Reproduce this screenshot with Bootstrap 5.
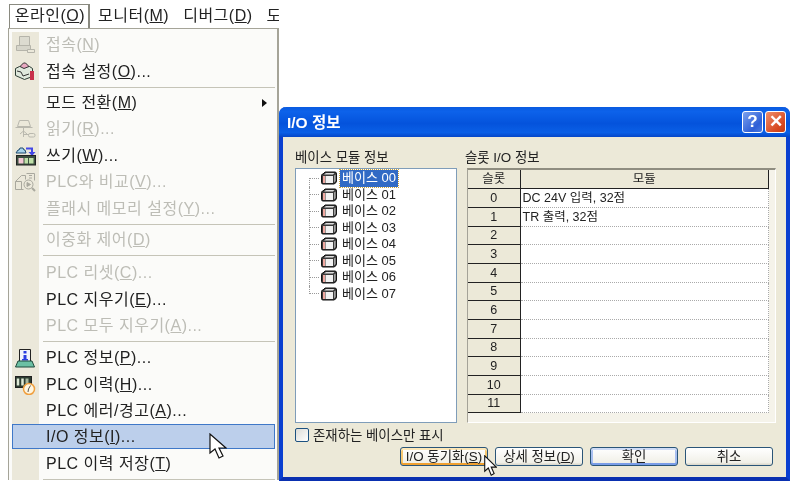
<!DOCTYPE html>
<html lang="ko">
<head>
<meta charset="utf-8">
<title>I/O 정보</title>
<link href="https://cdn.jsdelivr.net/npm/bootstrap@5.3.0/dist/css/bootstrap.min.css" rel="stylesheet">
<style>
html,body{height:100%;margin:0;background:#fff;overflow:hidden}
body{font-family:"Liberation Sans","Noto Sans CJK KR",sans-serif;color:#222}
.stage{position:relative;width:800px;height:493px;overflow:hidden;background:#fff;filter:blur(.35px)}
.menubar{height:24px;margin:4px 0 0 9px;width:270px;font-size:16px;letter-spacing:.5px;line-height:22px;overflow:hidden;white-space:nowrap}
.mb-active{width:81px;text-align:center;border:1px solid #8a8a80;border-bottom:0;border-right-width:2px;flex:none;padding-left:2px}
.mb-item{flex:none;margin-left:8px;padding-top:1px}
.mb-item+.mb-item{margin-left:14px}
.popmenu{position:absolute;left:8px;top:28px;width:271px;height:452px;background:#fbfbf9;border:1px solid #a5a498;border-width:1px 2px 0 1px;padding-top:3px;overflow:hidden;font-size:16px;letter-spacing:.5px}
.popmenu::before{content:"";position:absolute;left:3px;top:3px;bottom:0;width:27px;background:#ebe8da}
.mrow{position:relative;height:26.4px;display:flex;align-items:center;padding-left:34px;margin-left:3px;margin-right:2px;white-space:nowrap;color:#222}
.mrow.off{color:#bdbdb6}
.mrow.hot{background:#bccfeb;border:1px solid #3f78c8;padding-left:33px;height:25px;margin-bottom:1px}
.mico{position:absolute;left:2px;top:3px;width:22px;height:20px}
.msep{position:relative;height:1px;background:#c5c4b8;margin:2px 2px 2px 34px;border:0;opacity:1}
.msep.wide{margin-bottom:4px}
.msep.wider{margin-bottom:3px}
.arrow{position:absolute;right:8px;top:9px;width:0;height:0;border-left:5px solid #111;border-top:4px solid transparent;border-bottom:4px solid transparent}
.xpwin{position:absolute;left:279px;top:107px;width:511px;height:374px;background:#ece9d8;border:4px solid #0a3fd0;border-bottom-color:#0a30b0;border-top:0;border-radius:7px 7px 0 0;font-size:13.4px}
.xptitle{height:30px;margin:0 -4px;background:linear-gradient(#0a5be0,#0d62ea 15%,#0453dc 55%,#0a5fe6 85%,#0546c8);border-radius:7px 7px 0 0;color:#fff;font-weight:700;font-size:15.5px;padding-left:8px;line-height:31px;display:flex;align-items:center}
.wbtn{width:21px;height:22px;border:1px solid #fff;border-radius:3px;color:#fff;font-size:17px;font-weight:700;line-height:20px;text-align:center;flex:none;padding:0;margin-top:-1px}
.w-help{margin-left:auto;background:linear-gradient(135deg,#7ba2ee,#2f5fd6 70%,#4a7ae0)}
.w-close{margin-left:2px;margin-right:4px;background:linear-gradient(135deg,#ee8f6c,#d84a22 70%,#c63c12)}
.xpbody{padding:14px 12px 0}
.lbl{line-height:14px;height:18px;white-space:nowrap}
.treebox{width:162px;height:255px;background:#fff;border:1px solid #7f9db9;padding-top:1px;margin-top:-1px;font-size:13px}
.tnode{height:16.5px;display:flex;align-items:stretch;padding-left:13px;line-height:16px;white-space:nowrap}
.tstub{width:11px;flex:none;border-left:1px dotted #999;background:repeating-linear-gradient(90deg,#999 0 1px,transparent 1px 2px) left center/100% 1px no-repeat}
.tnode:first-child .tstub{height:50%;align-self:flex-end;background-position:left top}
.tnode:last-child .tstub{height:50%;background-position:left bottom}
.boxico{width:17px;height:14px;flex:none;align-self:center;margin-right:3px}
.tname{padding:0 2px}
.tname.sel{background:#316ac5;color:#fff;outline:1px dotted #c9a23a}
.slotframe{width:309px;height:255px;margin:-1px 0 0 2px;background:#f5f3ea;border-top:2px solid #8f8d80;border-left:1px solid #a5a398;border-right:1px solid #fff;border-bottom:1px solid #fff;padding-right:6px}
.slot-t{width:100%;margin:0;table-layout:fixed;border-collapse:collapse;background:#fff;font-size:12.5px;color:#222}
.slot-narrow{width:52px}
.slot-t th,.slot-t td{padding:0;line-height:16px;vertical-align:middle;font-weight:400;box-shadow:none;background:transparent;color:inherit}
.slot-t thead tr{height:18px}
.slot-t tbody tr{height:19px}
.slot-t tbody tr:nth-child(3n){height:18px}
.slot-t th{background:#ece9d8;text-align:center;border-right:1px solid #222;border-bottom:1px solid #222}
.slot-t td{padding-left:2px;border-bottom:1px dotted #aaa;border-right:1px dotted #aaa}
.chkrow{margin-top:5px;height:16px;line-height:15px;white-space:nowrap;padding:0;min-height:0}
.chkrow .form-check-input{float:none;margin:0 4px 0 0;width:14px;height:14px;border-radius:2px;border:1px solid #1c5180;background:linear-gradient(135deg,#dcdcd7,#fff);vertical-align:top}
.btnrow{margin-top:3px;padding-left:105px;gap:7px}
.xpbtn{width:88px;height:19px;padding:0;font-size:13.4px;line-height:16px;color:#222;border:1px solid #2a5578;border-radius:3px;background:linear-gradient(#fff,#f1f0e8 85%,#d8d5c8);white-space:nowrap}
.xpbtn.hotb{box-shadow:inset 0 -2px 0 #f0a030,inset 0 2px 0 #fce7b8,inset 2px 0 0 #f8c870,inset -2px 0 0 #f8c870}
.xpbtn.defb{box-shadow:inset 0 -2px 0 #7a9de8,inset 0 2px 0 #cfdcf6,inset 2px 0 0 #a8bff0,inset -2px 0 0 #a8bff0}
.curs{position:absolute;pointer-events:none}
.cur-a{left:209px;top:433px}
.cur-b{left:484px;top:455px}
</style>
</head>
<body>
<svg width="0" height="0" class="position-absolute" aria-hidden="true"><defs>
  <g id="modbox">
    <path d="M1.500 4.500Q1.500 3 3 3L5 1H15Q16.500 1 16.500 3V10Q16.500 12 14 13H3Q1.500 13 1.500 11.500Z" fill="#3a3a3a" stroke="#111"/>
    <path d="M3 5h2v7H3z" fill="#f0a8a0"/>
    <path d="M5.500 5H13v7H5.500z" fill="#f2f2f2"/>
    <path d="M4 3.500L6 2H14.500L13 3.500z" fill="#ddd"/>
    <path d="M14.200 4.500L15.500 3.500V10L14.200 11.500z" fill="#bbb"/>
  </g>
</defs></svg>
<div class="stage">
  <div class="menubar d-flex">
    <div class="mb-active">온라인(<u>O</u>)</div>
    <div class="mb-item">모니터(<u>M</u>)</div>
    <div class="mb-item">디버그(<u>D</u>)</div>
    <div class="mb-item">도</div>
  </div>

  <div class="popmenu">
    <div class="mrow off"><svg class="mico" viewBox="0 0 22 20"><path d="M5.500 1.500h10v9h-10z" fill="#dcdbd0" stroke="#b5b4aa"/><path d="M2.500 10.500h14v5h-14z" fill="#d6d5ca" stroke="#b5b4aa"/><path d="M13.500 14.500h7v3h-7z" fill="#ebe8da" stroke="#b5b4aa"/></svg>접속(<u>N</u>)</div>
    <div class="mrow"><svg class="mico" viewBox="0 0 22 20"><path d="M1.500 7.500l4-2h10l3 2v8l-8 3-9-4z" fill="#dfe8dc" stroke="#2c3c34"/><path d="M6 5.500l3.500-3.500h2l3.500 3.500-5 2z" fill="#e8a8c0" stroke="#333"/><path d="M3 10l4 1 2 4 6-2" fill="none" stroke="#333"/><rect x="16" y="10" width="4" height="9" fill="#c8304a"/></svg>접속 설정(<u>O</u>)...</div>
    <hr class="msep">
    <div class="mrow">모드 전환(<u>M</u>)<span class="arrow"></span></div>
    <div class="mrow off"><svg class="mico" viewBox="0 0 22 20"><g fill="none" stroke="#b9b8ae"><path d="M5.500 1.500h9l2 6h-13zM1.500 8.500h17"/><path d="M9.500 9v9M6 15l3.500-3 3.500 3M9.500 15.500H15"/><rect x="14.500" y="14.500" width="6.500" height="3.500" rx="1.500"/></g></svg>읽기(<u>R</u>)...</div>
    <div class="mrow"><svg class="mico" viewBox="0 0 22 20"><path d="M2 7l2-3h1l1-2h3l1 2h1l1 3z" fill="#a8d4ec" stroke="#1f4a6e"/><path d="M12 2.500h6V6" fill="none" stroke="#4448e6" stroke-width="2"/><path d="M14.500 6h7L18 10z" fill="#4448e6"/><rect x="2.500" y="9.500" width="19" height="9.500" fill="#3c5040" stroke="#222"/><rect x="4.500" y="12" width="5" height="5.500" fill="#f4c8d4"/><rect x="10.500" y="12" width="3.500" height="5.500" fill="#bfe0a8"/><rect x="15" y="12" width="4.500" height="5.500" fill="#bfe0a8"/></svg>쓰기(<u>W</u>)...</div>
    <div class="mrow off"><svg class="mico" viewBox="0 0 22 20"><g fill="none" stroke="#a9a89e"><path d="M1.500 9.500l6-6h4v4M1.500 9.500v8h8M1.500 9.500h6v8"/><path d="M12.500 1.500h8v7M15 3.500h3M15 6h3"/><circle cx="14.500" cy="12.500" r="4.500"/><path d="M13 10.500l3.500 2-3.500 2z" fill="#a9a89e"/><path d="M18 16l3 3" stroke-width="2"/></g></svg>PLC와 비교(<u>V</u>)...</div>
    <div class="mrow off">플래시 메모리 설정(<u>Y</u>)...</div>
    <hr class="msep">
    <div class="mrow off">이중화 제어(<u>D</u>)</div>
    <hr class="msep wide">
    <div class="mrow off">PLC 리셋(<u>C</u>)...</div>
    <div class="mrow">PLC 지우기(<u>E</u>)...</div>
    <div class="mrow off">PLC 모두 지우기(<u>A</u>)...</div>
    <hr class="msep wider">
    <div class="mrow"><svg class="mico" viewBox="0 0 22 20"><path d="M5.500 1.500h11v12h-11z" fill="#f0f2fb" stroke="#222"/><path d="M9.500 3h3v2.500h-3zM9.500 7h3v4h1.500v1.500H8V11h1.500z" fill="#2a3ce0"/><path d="M4 13h14l2.500 6H1.500z" fill="#6cc0a4" stroke="#1f4a3c"/></svg>PLC 정보(<u>P</u>)...</div>
    <div class="mrow"><svg class="mico" viewBox="0 0 22 20"><rect x="1.500" y="1.500" width="16" height="11" fill="#2c3c30" stroke="#222"/><path d="M4 3.500v7M8.500 3.500v7" stroke="#e0ead8" stroke-width="2.500"/><path d="M13 3.500v7" stroke="#a8b8a0" stroke-width="3"/><circle cx="15" cy="14" r="5.500" fill="#fff6e0" stroke="#f0a040" stroke-width="1.500"/><path d="M16.500 10.500L14.500 14l-.5 3" stroke="#555" fill="none"/></svg>PLC 이력(<u>H</u>)...</div>
    <div class="mrow">PLC 에러/경고(<u>A</u>)...</div>
    <div class="mrow hot">I/O 정보(<u>I</u>)...</div>
    <div class="mrow">PLC 이력 저장(<u>T</u>)</div>
    <hr class="msep">
  </div>

  <div class="xpwin">
    <div class="xptitle">
      <span>I/O 정보</span>
      <button class="wbtn w-help" type="button">?</button>
      <button class="wbtn w-close" type="button">✕</button>
    </div>
    <div class="xpbody">
      <div class="d-flex gap-2">
        <div>
          <div class="lbl">베이스 모듈 정보</div>
          <div class="treebox">
            <div class="tnode"><span class="tstub"></span><svg class="boxico" viewBox="0 0 17 14"><use href="#modbox"/></svg><span class="tname sel">베이스 00</span></div>
            <div class="tnode"><span class="tstub"></span><svg class="boxico" viewBox="0 0 17 14"><use href="#modbox"/></svg><span class="tname">베이스 01</span></div>
            <div class="tnode"><span class="tstub"></span><svg class="boxico" viewBox="0 0 17 14"><use href="#modbox"/></svg><span class="tname">베이스 02</span></div>
            <div class="tnode"><span class="tstub"></span><svg class="boxico" viewBox="0 0 17 14"><use href="#modbox"/></svg><span class="tname">베이스 03</span></div>
            <div class="tnode"><span class="tstub"></span><svg class="boxico" viewBox="0 0 17 14"><use href="#modbox"/></svg><span class="tname">베이스 04</span></div>
            <div class="tnode"><span class="tstub"></span><svg class="boxico" viewBox="0 0 17 14"><use href="#modbox"/></svg><span class="tname">베이스 05</span></div>
            <div class="tnode"><span class="tstub"></span><svg class="boxico" viewBox="0 0 17 14"><use href="#modbox"/></svg><span class="tname">베이스 06</span></div>
            <div class="tnode"><span class="tstub"></span><svg class="boxico" viewBox="0 0 17 14"><use href="#modbox"/></svg><span class="tname">베이스 07</span></div>
          </div>
        </div>
        <div>
          <div class="lbl">슬롯 I/O 정보</div>
          <div class="slotframe">
            <table class="slot-t">
              <colgroup><col class="slot-narrow"><col></colgroup>
              <thead><tr><th>슬롯</th><th>모듈</th></tr></thead>
              <tbody>
                <tr><th>0</th><td>DC 24V 입력, 32점</td></tr>
                <tr><th>1</th><td>TR 출력, 32점</td></tr>
                <tr><th>2</th><td></td></tr>
                <tr><th>3</th><td></td></tr>
                <tr><th>4</th><td></td></tr>
                <tr><th>5</th><td></td></tr>
                <tr><th>6</th><td></td></tr>
                <tr><th>7</th><td></td></tr>
                <tr><th>8</th><td></td></tr>
                <tr><th>9</th><td></td></tr>
                <tr><th>10</th><td></td></tr>
                <tr><th>11</th><td></td></tr>
              </tbody>
            </table>
          </div>
        </div>
      </div>
      <div class="form-check chkrow"><input class="form-check-input" type="checkbox" id="onlyBase"><label for="onlyBase">존재하는 베이스만 표시</label></div>
      <div class="d-flex btnrow">
        <button type="button" class="btn xpbtn hotb">I/O 동기화(<u>S</u>)</button>
        <button type="button" class="btn xpbtn">상세 정보(<u>D</u>)</button>
        <button type="button" class="btn xpbtn defb">확인</button>
        <button type="button" class="btn xpbtn">취소</button>
      </div>
    </div>
  </div>

  <svg class="curs cur-a" width="18" height="26" viewBox="0 0 18 26"><path d="M1 1v19l5-4 4 9 4-2-4-8h7z" fill="#fff" stroke="#111" stroke-width="1.2"/></svg>
  <svg class="curs cur-b" width="13" height="21" viewBox="0 0 18 26" preserveAspectRatio="none"><path d="M1 1v19l5-4 4 9 4-2-4-8h7z" fill="#fff" stroke="#111" stroke-width="1.5"/></svg>
</div>
</body>
</html>
